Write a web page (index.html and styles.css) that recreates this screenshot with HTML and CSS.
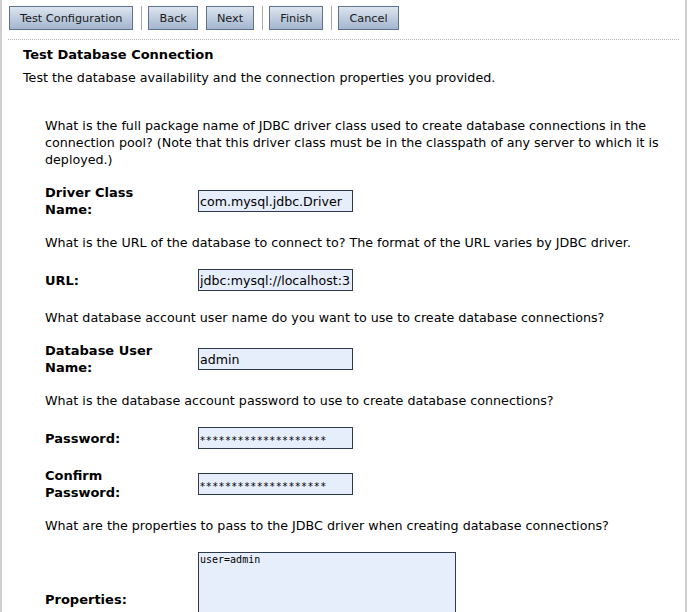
FILE: index.html
```html
<!DOCTYPE html>
<html>
<head>
<meta charset="utf-8">
<link rel="stylesheet" href="styles.css">
</head>
<body>
<div class="page">
  <div class="toolbar">
    <button class="btn">Test Configuration</button>
    <span class="sep"></span>
    <button class="btn">Back</button>
    <button class="btn">Next</button>
    <span class="sep"></span>
    <button class="btn">Finish</button>
    <span class="sep"></span>
    <button class="btn">Cancel</button>
  </div>
  <div class="rule"></div>
  <h1 class="title">Test Database Connection</h1>
  <p class="subtitle">Test the database availability and the connection properties you provided.</p>

  <div class="form">
    <p class="help">What is the full package name of JDBC driver class used to create database connections in the connection pool? (Note that this driver class must be in the classpath of any server to which it is deployed.)</p>
    <div class="row">
      <label class="label">Driver Class Name:</label>
      <div class="field"><input class="input" type="text" value="com.mysql.jdbc.Driver"></div>
    </div>

    <p class="help">What is the URL of the database to connect to? The format of the URL varies by JDBC driver.</p>
    <div class="row">
      <label class="label">URL:</label>
      <div class="field"><input class="input" type="text" value="jdbc:mysql://localhost:3306/test"></div>
    </div>

    <p class="help">What database account user name do you want to use to create database connections?</p>
    <div class="row">
      <label class="label">Database User Name:</label>
      <div class="field"><input class="input" type="text" value="admin"></div>
    </div>

    <p class="help">What is the database account password to use to create database connections?</p>
    <div class="row">
      <label class="label">Password:</label>
      <div class="field"><input class="input pw" type="text" value="********************"></div>
    </div>
    <div class="row">
      <label class="label">Confirm Password:</label>
      <div class="field"><input class="input pw" type="text" value="********************"></div>
    </div>

    <p class="help">What are the properties to pass to the JDBC driver when creating database connections?</p>
    <div class="row">
      <label class="label">Properties:</label>
      <div class="field"><textarea class="area">user=admin</textarea></div>
    </div>
  </div>
</div>
</body>
</html>
```
FILE: styles.css
```css
html, body {
  margin: 0;
  padding: 0;
  background: #ffffff;
}
body {
  font-family: "DejaVu Sans", Verdana, sans-serif;
  font-size: 12.7px;
  color: #000;
}
.page {
  width: 683px;
  height: 612px;
  border-left: 2px solid #cfcfcf;
  border-right: 2px solid #cfcfcf;
  overflow: hidden;
  box-sizing: content-box;
}
.toolbar {
  display: flex;
  align-items: center;
  padding: 6px 0 0 7px;
  height: 24px;
}
.btn {
  height: 24px;
  box-sizing: border-box;
  border: 1px solid #5f7290;
  background: linear-gradient(#dde5ef, #b9c8db 60%, #a3b6cf);
  font-family: "DejaVu Sans", Verdana, sans-serif;
  font-size: 11.3px;
  color: #1a1a1a;
  padding: 0 10px;
  margin-right: 8px;
}
.sep {
  width: 1px;
  height: 24px;
  background: #a8a8a8;
  margin-right: 6px;
}
.rule {
  margin: 9px 6px 0 6px;
  border-top: 1px dotted #b8b8b8;
}
.title {
  font-size: 13px;
  font-weight: bold;
  margin: 6px 0 0 21px;
  line-height: 17px;
}
.subtitle {
  margin: 6px 0 0 21px;
  line-height: 17px;
}
.form {
  display: flex;
  flex-direction: column;
  gap: 16px;
  padding: 31px 20px 0 43px;
}
.help {
  margin: 0;
  line-height: 17px;
}
.row {
  display: grid;
  grid-template-columns: 153px auto;
  align-items: center;
  min-height: 26px;
}
.label {
  font-weight: bold;
  font-size: 13px;
  line-height: 17px;
  max-width: 120px;
}
.field {
  display: flex;
  padding: 2px 0;
}
.input {
  width: 155px;
  height: 22px;
  box-sizing: border-box;
  border: 1px solid #2e3b4e;
  background: #e6edfb;
  font-family: "DejaVu Sans", Verdana, sans-serif;
  font-size: 12.6px;
  padding: 0 1px;
  margin: 0;
  color: #000;
}
.input.pw {
  font-size: 10px;
  letter-spacing: 1.35px;
  padding-top: 4px;
}
.area {
  width: 258px;
  height: 95px;
  box-sizing: border-box;
  border: 1px solid #2e3b4e;
  background: #e6edfb;
  font-family: "DejaVu Sans Mono", monospace;
  font-size: 10px;
  padding: 1px;
  margin: 0;
  resize: none;
}
```
